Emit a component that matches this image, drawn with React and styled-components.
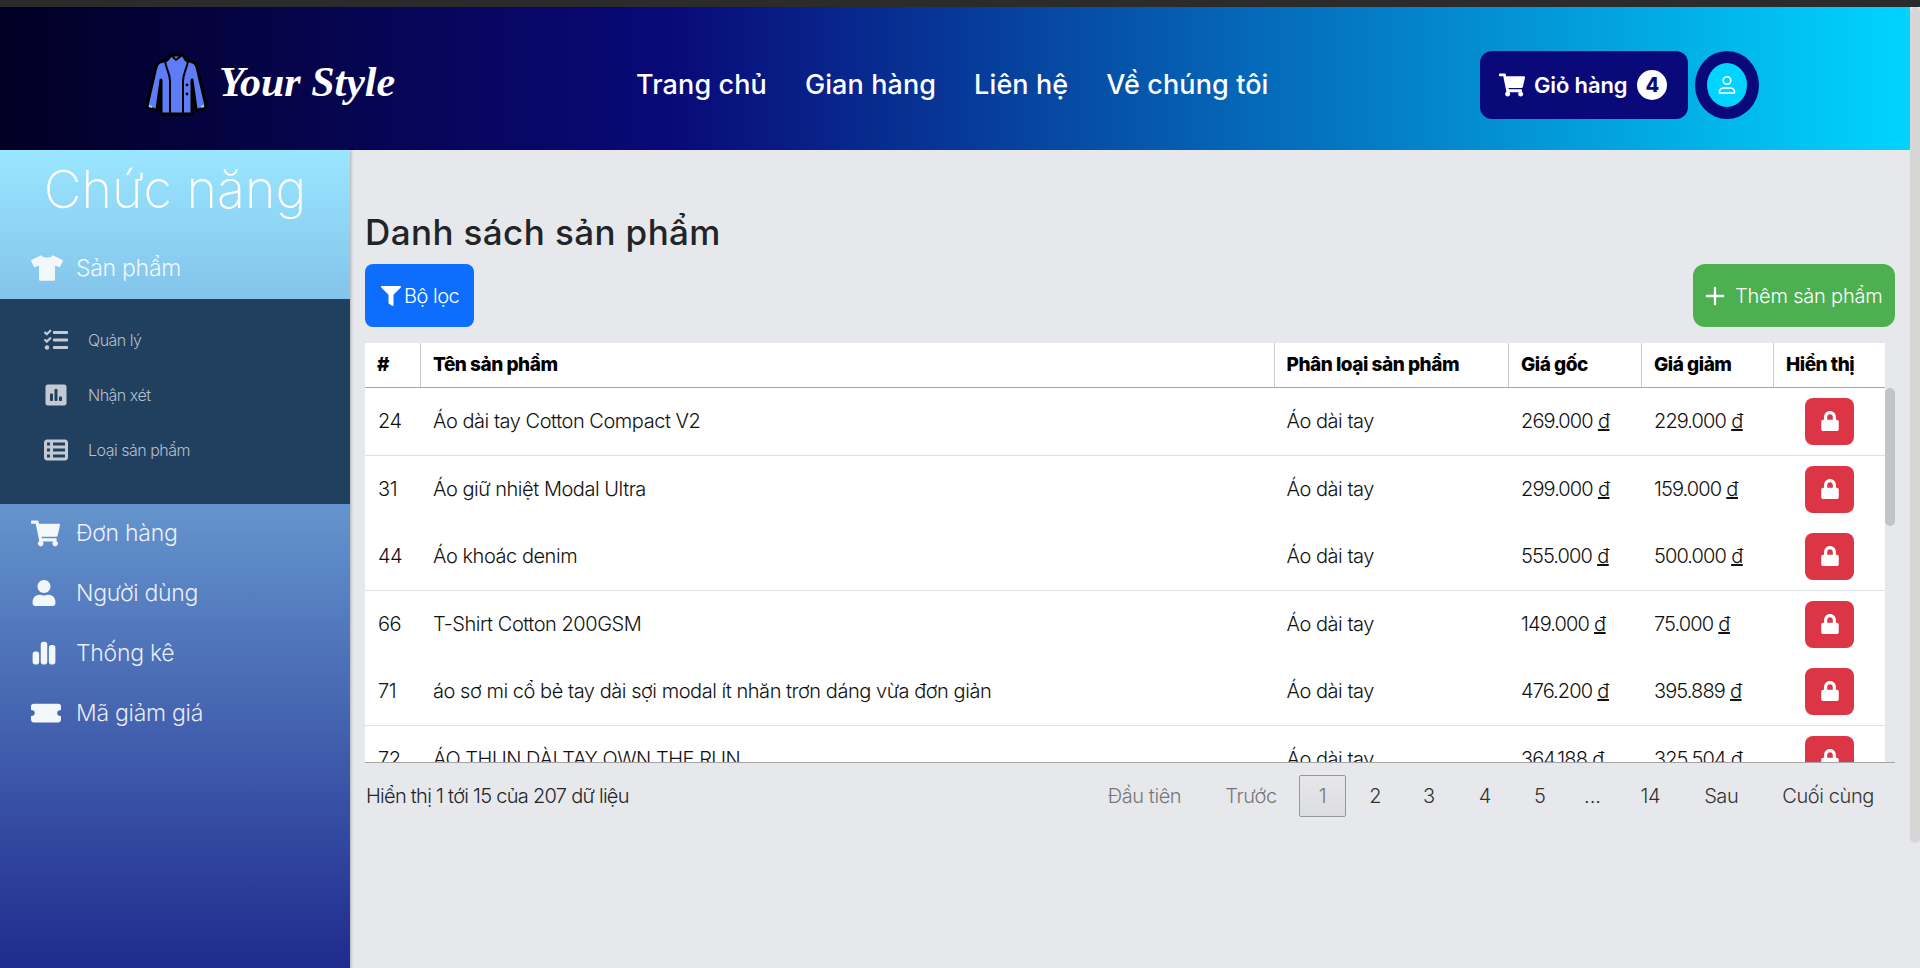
import React from 'react';
import styled, { createGlobalStyle } from 'styled-components';
import { FaShoppingCart, FaUser, FaTshirt, FaTasks, FaPoll, FaFilter, FaLock } from 'react-icons/fa';
import { FaChartSimple, FaTableList } from 'react-icons/fa6';
import { BsTicketFill } from 'react-icons/bs';
import { LuPlus } from 'react-icons/lu';

const GlobalStyle = createGlobalStyle`
    html, body {
        margin: 0;
        height: 100%;
        overflow: hidden;
        background: #2b2b2b;
    }
    * {
        box-sizing: border-box;
    }
    body {
        font-family: Inter, "Noto Sans", sans-serif;
        color: #212529;
    }
`;

const TopStrip = styled.div`
    height: 7px;
    background: #2b2b2b;
`;

const Frame = styled.div`
    height: 961px;
    display: flex;
    background: #e7e8ec;
`;

const Page = styled.div`
    flex: 1;
    min-width: 0;
    overflow: hidden;
`;

const ScrollTrack = styled.div`
    width: 10px;
    flex: none;
`;

const ScrollThumb = styled.div`
    height: ${(p) => p.$length}px;
    background: ${(p) => p.$color};
    border-radius: 5px;
`;

const Header = styled.header`
    height: 143px;
    padding-top: 12px;
    display: grid;
    grid-template-columns: 636px 844px auto;
    align-items: center;
    background: linear-gradient(90deg, #020024 0%, #090979 35%, #00d4ff 100%);
`;

const Logo = styled.div`
    display: flex;
    align-items: center;
    gap: 12px;
    padding-left: 146px;
`;

const LogoText = styled.span`
    color: #fff;
    font-family: "Liberation Serif", serif;
    font-style: italic;
    font-weight: 700;
    font-size: 42px;
    line-height: 46px;
    margin-bottom: 6px;
    white-space: nowrap;
`;

const Nav = styled.nav`
    display: flex;
    gap: 38px;
`;

const NavLink = styled.a`
    color: #fff;
    font-size: 27px;
    font-weight: 500;
    letter-spacing: 0.1px;
    white-space: nowrap;
`;

const Actions = styled.div`
    display: flex;
    gap: 7px;
`;

const CartButton = styled.button`
    width: 208px;
    height: 68px;
    display: flex;
    align-items: center;
    padding: 0 0 0 19px;
    border: 0;
    border-radius: 12px;
    background: #090979;
    color: #fff;
    font: 600 22px Inter, sans-serif;
    letter-spacing: -0.15px;

    svg {
        font-size: 26px;
        margin-right: 9px;
    }
`;

const Badge = styled.span`
    width: 30px;
    height: 30px;
    margin-left: 10px;
    border-radius: 50%;
    background: #fff;
    color: #090979;
    font-size: 20px;
    font-weight: 800;
    display: flex;
    align-items: center;
    justify-content: center;
`;

const Avatar = styled.div`
    width: 64px;
    height: 68px;
    border-radius: 50%;
    background: #090979;
    display: flex;
    align-items: center;
    justify-content: center;
`;

const AvatarInner = styled.div`
    width: 40px;
    height: 44px;
    border-radius: 50%;
    background: #00d4ff;
    display: flex;
    align-items: center;
    justify-content: center;
`;

const Layout = styled.div`
    display: flex;
    min-height: 962px;
`;

const Sidebar = styled.aside`
    width: 350px;
    flex: none;
    background: linear-gradient(180deg, #9ae6ff 0%, #090979 100%);
    box-shadow: 1px 0 3px rgba(0, 0, 0, 0.25);
    color: rgba(255, 255, 255, 0.88);
`;

const SidebarTitle = styled.h2`
    margin: 0;
    height: 88px;
    padding-top: 10px;
    text-align: center;
    color: #fff;
    font-size: 52px;
    font-weight: 200;
    line-height: 60px;
`;

const MenuItem = styled.a`
    height: 60px;
    display: flex;
    align-items: center;
    padding-left: 31px;
    font-size: 23px;
    font-weight: 300;
    letter-spacing: -0.28px;
`;

const MenuIcon = styled.span`
    width: 45px;
    flex: none;
    display: flex;
    align-items: center;
    color: #f2f7fc;
    font-size: ${(p) => p.$size || 26}px;
`;

const SubMenu = styled.div`
    height: 205px;
    margin: 1px 0 -1px;
    padding-top: 13px;
    background: #21405f;
    color: #b6bfca;
`;

const SubItem = styled.a`
    height: 55px;
    display: flex;
    align-items: center;
    padding-left: 44px;
    font-size: 16px;
    font-weight: 300;
    letter-spacing: -0.5px;
`;

const SubIcon = styled.span`
    width: 44px;
    flex: none;
    display: flex;
    color: #c3cad4;
    font-size: 24px;
`;

const Main = styled.main`
    flex: 1;
    min-width: 0;
    padding: 61px 15px 0;
`;

const Title = styled.h1`
    margin: 0 0 11px;
    font-size: 35px;
    font-weight: 450;
    line-height: 42px;
    letter-spacing: 0.4px;
`;

const Toolbar = styled.div`
    display: flex;
    justify-content: space-between;
    margin-bottom: 16px;
`;

const ActionButton = styled.button`
    height: 63px;
    display: flex;
    align-items: center;
    border: 0;
    color: #fff;
    font: 300 20px Inter, sans-serif;
    letter-spacing: -0.2px;
`;

const FilterButton = styled(ActionButton)`
    width: 109px;
    padding-left: 16px;
    gap: 3px;
    background: #0d6efd;
    border-radius: 8px;
    letter-spacing: -0.5px;
`;

const AddButton = styled(ActionButton)`
    width: 202px;
    padding-left: 8px;
    gap: 6px;
    background: #4caf50;
    border-radius: 12px;
`;

const columns = '55px 853.5px 234.5px 133px 132px 112px';

const HeadRow = styled.div`
    width: 1520px;
    height: 45px;
    display: grid;
    grid-template-columns: ${columns};
    background: #fff;
    border-bottom: 1px solid #a5a5a5;
`;

const HeadCell = styled.div`
    display: flex;
    align-items: center;
    padding: 0 0 2px 12px;
    font-size: 19px;
    font-weight: 800;
    letter-spacing: -0.48px;
    color: #000;
    white-space: nowrap;

    & + & {
        border-left: 1px solid #ccc;
    }
`;

const TableBody = styled.div`
    height: 375px;
    display: flex;
    overflow: hidden;
    border-bottom: 1px solid #a5a5a5;
`;

const Rows = styled.div`
    width: 1520px;
    flex: none;
`;

const Row = styled.div`
    height: 67.5px;
    display: grid;
    grid-template-columns: ${columns};
    align-items: center;
    background: #fff;
    border-bottom: ${(p) => (p.$line ? '1px solid #dee2e6' : '0')};
`;

const Cell = styled.div`
    padding-left: 13px;
    font-size: 20px;
    font-weight: 300;
    letter-spacing: -0.46px;
    color: #111;
    white-space: nowrap;
`;

const Amount = styled.span`
    letter-spacing: -0.9px;
`;

const LockButton = styled.button`
    width: 49px;
    height: 47px;
    margin-left: 32px;
    border: 0;
    border-radius: 8px;
    background: #dc3545;
    color: #fff;
    font-size: 20px;
    display: flex;
    align-items: center;
    justify-content: center;
`;

const Footer = styled.div`
    display: flex;
    align-items: center;
    justify-content: space-between;
    padding-top: 12px;
`;

const Info = styled.div`
    font-size: 20px;
    font-weight: 300;
    letter-spacing: -0.72px;
    padding-left: 1px;
`;

const Pager = styled.div`
    display: flex;
    align-items: center;
    margin-right: 2px;
`;

const PageButton = styled.a`
    height: 42px;
    display: flex;
    align-items: center;
    justify-content: center;
    margin-left: ${(p) => p.$gap ?? 6}px;
    padding: 0 ${(p) => (p.$active ? 19 : 18)}px;
    font-size: 20px;
    font-weight: 300;
    letter-spacing: -0.4px;
    border: 1px solid ${(p) => (p.$active ? '#979797' : 'transparent')};
    border-radius: 2px;
    background: ${(p) => (p.$active ? 'linear-gradient(180deg, #e7e7e9 0%, #dcdde0 100%)' : 'transparent')};
    color: ${(p) => (p.$disabled ? '#777' : '#333')};
`;

const Dots = styled.span`
    width: 48px;
    margin-left: 4px;
    text-align: center;
    font-size: 20px;
    font-weight: 300;
`;

const products = [
    { id: 24, name: 'Áo dài tay Cotton Compact V2', price: '269.000', sale: '229.000' },
    { id: 31, name: 'Áo giữ nhiệt Modal Ultra', price: '299.000', sale: '159.000' },
    { id: 44, name: 'Áo khoác denim', price: '555.000', sale: '500.000' },
    { id: 66, name: 'T-Shirt Cotton 200GSM', price: '149.000', sale: '75.000' },
    { id: 71, name: 'áo sơ mi cổ bẻ tay dài sợi modal ít nhăn trơn dáng vừa đơn giản', price: '476.200', sale: '395.889' },
    { id: 72, name: 'ÁO THUN DÀI TAY OWN THE RUN', price: '364.188', sale: '325.504' },
];

const heads = ['#', 'Tên sản phẩm', 'Phân loại sản phẩm', 'Giá gốc', 'Giá giảm', 'Hiển thị'];

function JacketLogo() {
    return (
        <svg width="61" height="63" viewBox="0 0 61 63">
            <path
                d="M25 2h12l3 5 7 2c2 1 3 2 4 5l9 39c0 1-1 2-2 2l-6 2c-1 0-2 0-2-1l-4-29v32c0 1-1 2-2 2H17c-1 0-2-1-2-2V27l-4 29c0 1-1 1-2 1l-6-2c-1 0-2-1-2-2l9-39c1-3 2-4 4-5l7-2z"
                fill="#5f7cf7"
                stroke="#000"
                strokeWidth="3"
                strokeLinejoin="round"
            />
            <path
                d="M19 8c1 8 5 12 5 20v32M42 8c-1 8-5 12-5 20v32M25 2l5 5 6-5"
                fill="none"
                stroke="#000"
                strokeWidth="2"
            />
            <circle cx="41" cy="32" r="1.4" fill="#000" />
            <circle cx="41" cy="41" r="1.4" fill="#000" />
            <path d="M3 53l3 1M55 54l3-1" stroke="#6fe0f5" strokeWidth="2" />
        </svg>
    );
}

function PersonOutline() {
    return (
        <svg width="20" height="20" viewBox="0 0 20 20" fill="none" stroke="#fff" strokeWidth="1.6">
            <circle cx="10" cy="5.5" r="3.8" />
            <path d="M2.5 18v-1.5c0-2 2-3.5 4-3.5h7c2 0 4 1.500 4 3.500V18z" strokeLinejoin="round" />
        </svg>
    );
}

function Price({ value }) {
    return (
        <Cell>
            <Amount>{value}</Amount> <u>đ</u>
        </Cell>
    );
}

function App() {
    return (
        <>
            <GlobalStyle />
            <TopStrip />
            <Frame>
                <Page>
                    <Header>
                        <Logo>
                            <JacketLogo />
                            <LogoText>Your Style</LogoText>
                        </Logo>
                        <Nav>
                            <NavLink>Trang chủ</NavLink>
                            <NavLink>Gian hàng</NavLink>
                            <NavLink>Liên hệ</NavLink>
                            <NavLink>Về chúng tôi</NavLink>
                        </Nav>
                        <Actions>
                            <CartButton>
                                <FaShoppingCart />
                                Giỏ hàng
                                <Badge>4</Badge>
                            </CartButton>
                            <Avatar>
                                <AvatarInner>
                                    <PersonOutline />
                                </AvatarInner>
                            </Avatar>
                        </Actions>
                    </Header>
                    <Layout>
                        <Sidebar>
                            <SidebarTitle>Chức năng</SidebarTitle>
                            <MenuItem>
                                <MenuIcon $size={32}><FaTshirt /></MenuIcon>
                                Sản phẩm
                            </MenuItem>
                            <SubMenu>
                                <SubItem><SubIcon><FaTasks /></SubIcon>Quản lý</SubItem>
                                <SubItem><SubIcon><FaPoll /></SubIcon>Nhận xét</SubItem>
                                <SubItem><SubIcon><FaTableList /></SubIcon>Loại sản phẩm</SubItem>
                            </SubMenu>
                            <MenuItem>
                                <MenuIcon $size={29}><FaShoppingCart /></MenuIcon>
                                Đơn hàng
                            </MenuItem>
                            <MenuItem>
                                <MenuIcon><FaUser /></MenuIcon>
                                Người dùng
                            </MenuItem>
                            <MenuItem>
                                <MenuIcon><FaChartSimple /></MenuIcon>
                                Thống kê
                            </MenuItem>
                            <MenuItem>
                                <MenuIcon $size={30}><BsTicketFill /></MenuIcon>
                                Mã giảm giá
                            </MenuItem>
                        </Sidebar>
                        <Main>
                            <Title>Danh sách sản phẩm</Title>
                            <Toolbar>
                                <FilterButton><FaFilter size={20} />Bộ lọc</FilterButton>
                                <AddButton><LuPlus size={28} />Thêm sản phẩm</AddButton>
                            </Toolbar>
                            <HeadRow>
                                {heads.map((h) => <HeadCell key={h}>{h}</HeadCell>)}
                            </HeadRow>
                            <TableBody>
                                <Rows>
                                    {products.map((p, i) => (
                                        <Row key={p.id} $line={i % 2 === 0}>
                                            <Cell>{p.id}</Cell>
                                            <Cell>{p.name}</Cell>
                                            <Cell>Áo dài tay</Cell>
                                            <Price value={p.price} />
                                            <Price value={p.sale} />
                                            <LockButton><FaLock /></LockButton>
                                        </Row>
                                    ))}
                                </Rows>
                                <ScrollTrack>
                                    <ScrollThumb $length={138} $color="#c3c4c8" />
                                </ScrollTrack>
                            </TableBody>
                            <Footer>
                                <Info>Hiển thị 1 tới 15 của 207 dữ liệu</Info>
                                <Pager>
                                    <PageButton $disabled>Đầu tiên</PageButton>
                                    <PageButton $disabled>Trước</PageButton>
                                    <PageButton $active $disabled $gap={3}>1</PageButton>
                                    <PageButton $gap={4}>2</PageButton>
                                    <PageButton $gap={4}>3</PageButton>
                                    <PageButton>4</PageButton>
                                    <PageButton $gap={5}>5</PageButton>
                                    <Dots>...</Dots>
                                    <PageButton $gap={5}>14</PageButton>
                                    <PageButton>Sau</PageButton>
                                    <PageButton>Cuối cùng</PageButton>
                                </Pager>
                            </Footer>
                        </Main>
                    </Layout>
                </Page>
                <ScrollTrack>
                    <ScrollThumb $length={836} $color="#d6d6d6" />
                </ScrollTrack>
            </Frame>
        </>
    );
}

export default App;
